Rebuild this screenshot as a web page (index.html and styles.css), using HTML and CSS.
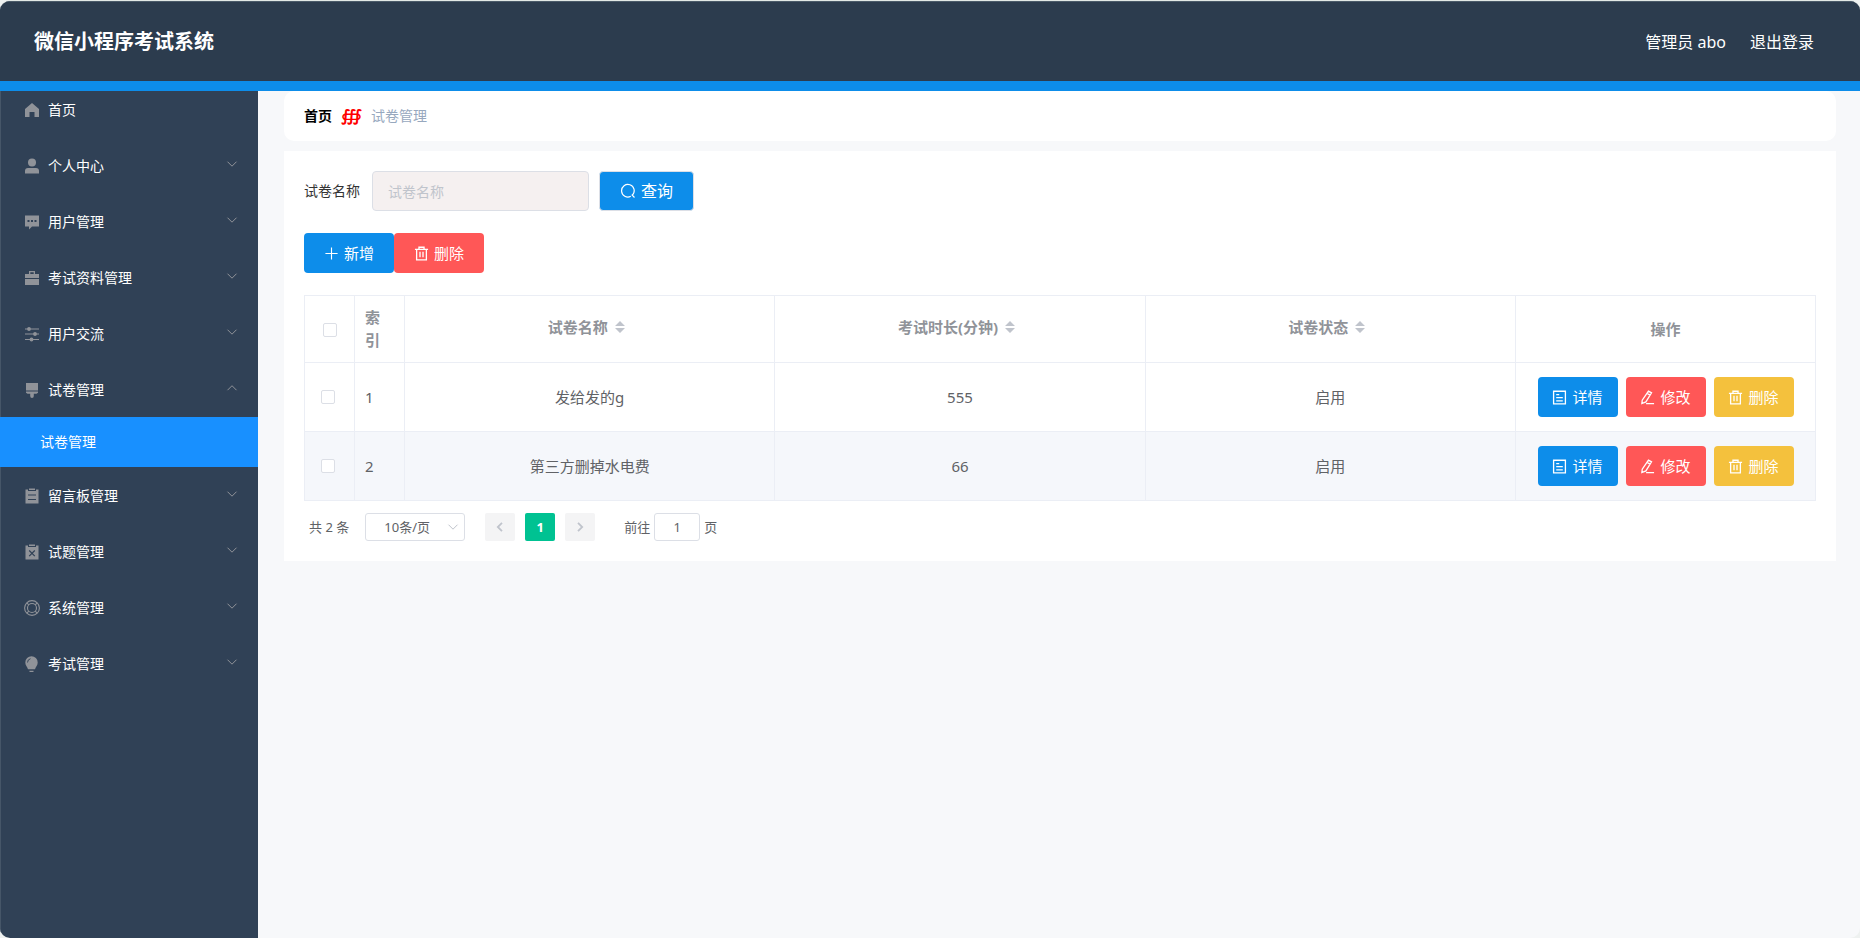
FILE: index.html
```html
<!DOCTYPE html>
<html lang="zh-CN">
<head>
<meta charset="utf-8">
<title>微信小程序考试系统</title>
<link rel="stylesheet" href="styles.css">
</head>
<body>
<svg class="sprite" aria-hidden="true">
  <symbol id="i-home" viewBox="0 0 16 16"><path fill="currentColor" d="M8 1 1 7v8h4.500v-5h5v5H15V7z"/></symbol>
  <symbol id="i-user" viewBox="0 0 16 16"><circle cx="8" cy="4.500" r="4" fill="currentColor"/><path fill="currentColor" d="M1 15.500V13q0-3 3-3h8q3 0 3 3v2.500z"/></symbol>
  <symbol id="i-chat" viewBox="0 0 16 16"><path fill="currentColor" fill-rule="evenodd" d="M1 1.500h14v11H8l-3 3v-3H1zM3.500 6v2h2V6zM7 6v2h2V6zm3.500 0v2h2V6z"/></symbol>
  <symbol id="i-case" viewBox="0 0 16 16"><path fill="currentColor" fill-rule="evenodd" d="M5 1h6v3h4v4H1V4h4zm1.300 1.300V4h3.400V2.300zM1 9h14v6H1z"/></symbol>
  <symbol id="i-sliders" viewBox="0 0 16 16"><path stroke="currentColor" stroke-width="1.200" d="M1 3h14M1 8h14M1 13.500h14"/><g fill="currentColor"><circle cx="5" cy="3" r="1.900"/><circle cx="11" cy="8" r="1.900"/><circle cx="7.500" cy="13.500" r="1.900"/></g></symbol>
  <symbol id="i-brush" viewBox="0 0 16 16"><path fill="currentColor" d="M2 1h12v7.500H2zM2 9.500h12v1.300l-1.500 1h-2.700V14q0 2-1.800 2T6.200 14v-2.200H3.500l-1.500-1z"/></symbol>
  <symbol id="i-order" viewBox="0 0 16 16"><path fill="currentColor" fill-rule="evenodd" d="M1.500 1.500H4V3h8V1.500h2.500v14h-13zM4 6.500v1h8v-1zm0 4.500v1h8v-1z"/><path fill="currentColor" d="M5 .500h6V2H5z"/></symbol>
  <symbol id="i-claim" viewBox="0 0 16 16"><path fill="currentColor" d="M1.500 1.500H4V3h8V1.500h2.500v14h-13zM5 .500h6V2H5z"/><path stroke="#304156" stroke-width="1.200" d="m5.200 6.500 5.600 5.600m0-5.600-5.600 5.600"/></symbol>
  <symbol id="i-help" viewBox="0 0 16 16"><g fill="none" stroke="currentColor" stroke-width="1.100"><circle cx="8" cy="8" r="7.400"/><circle cx="8" cy="8" r="4.500"/><path d="m2.800 2.800 2 2m6.400 6.400 2 2m0-10.400-2 2m-6.400 6.400-2 2"/></g></symbol>
  <symbol id="i-bulb" viewBox="0 0 16 16"><path fill="currentColor" d="M7.500.300a6.200 6.200 0 0 1 6.200 6.200c0 3-2 4-2.700 6.700H4C3.300 10.500 1.300 9.500 1.300 6.500A6.200 6.200 0 0 1 7.500.300zM5.500 14.800h4V16h-4z"/><path fill="none" stroke="#304156" stroke-width=".9" d="M3.500 6.500a4 4 0 0 1 3-3.800"/></symbol>
  <symbol id="i-down" viewBox="0 0 12 12"><path fill="none" stroke="currentColor" d="m1.500 3.700 4.500 4.500 4.500-4.500"/></symbol>
  <symbol id="i-up" viewBox="0 0 12 12"><path fill="none" stroke="currentColor" d="m1.500 8.200 4.500-4.500 4.500 4.500"/></symbol>
  <symbol id="i-left" viewBox="0 0 12 12"><path fill="none" stroke="currentColor" stroke-width="1.800" d="M8 1.800 3.800 6 8 10.200"/></symbol>
  <symbol id="i-right" viewBox="0 0 12 12"><path fill="none" stroke="currentColor" stroke-width="1.800" d="M4 1.800 8.200 6 4 10.200"/></symbol>
  <symbol id="i-search" viewBox="0 0 16 16"><path fill="none" stroke="currentColor" stroke-width="1.200" d="M10.800 13.300A6.300 6.300 0 1 1 12.500 12m-.8-.3 2.800 2.800"/></symbol>
  <symbol id="i-plus" viewBox="0 0 16 16"><path stroke="currentColor" stroke-width="1.200" d="M8 1.500v13M1.500 8h13"/></symbol>
  <symbol id="i-trash" viewBox="0 0 16 16"><path fill="none" stroke="currentColor" stroke-width="1.400" d="M1 3.500h14M5.300 3.500V1.300h5.400v2.200M2.800 3.500v11.200h10.400V3.500M6.400 6v6M9.600 6v6"/></symbol>
  <symbol id="i-doc" viewBox="0 0 16 16"><path fill="none" stroke="currentColor" stroke-width="1.400" d="M1.700 1.300h12.600v13.400H1.700zM4.500 5h3.200M4.500 8.200h7M4.500 11.500h7"/></symbol>
  <symbol id="i-edit" viewBox="0 0 16 16"><path fill="none" stroke="currentColor" stroke-width="1.400" d="M9 1.200 12.300 3 6.300 12.700 2 14.400l.4-3.600zM7.500 3.600l3.300 1.900M6.500 14.500H15"/></symbol>
  <symbol id="i-sort" viewBox="0 0 10 12"><path fill="currentColor" d="M0 5 5 0l5 5zM0 7l5 5 5-5z"/></symbol>
</svg>
<div class="app">
  <header class="topbar">
    <h1 class="brand">微信小程序考试系统</h1>
    <nav class="account"><span>管理员 abo</span><a href="#">退出登录</a></nav>
  </header>
  <div class="body">
    <nav class="sidebar">
      <a class="item home" href="#"><svg class="ico"><use href="#i-home"/></svg><span>首页</span></a>
      <button class="item"><svg class="ico"><use href="#i-user"/></svg><span>个人中心</span><svg class="arrow"><use href="#i-down"/></svg></button>
      <button class="item"><svg class="ico"><use href="#i-chat"/></svg><span>用户管理</span><svg class="arrow"><use href="#i-down"/></svg></button>
      <button class="item"><svg class="ico"><use href="#i-case"/></svg><span>考试资料管理</span><svg class="arrow"><use href="#i-down"/></svg></button>
      <button class="item"><svg class="ico"><use href="#i-sliders"/></svg><span>用户交流</span><svg class="arrow"><use href="#i-down"/></svg></button>
      <button class="item" aria-expanded="true"><svg class="ico"><use href="#i-brush"/></svg><span>试卷管理</span><svg class="arrow"><use href="#i-up"/></svg></button>
      <a class="subitem" href="#">试卷管理</a>
      <button class="item"><svg class="ico"><use href="#i-order"/></svg><span>留言板管理</span><svg class="arrow"><use href="#i-down"/></svg></button>
      <button class="item"><svg class="ico"><use href="#i-claim"/></svg><span>试题管理</span><svg class="arrow"><use href="#i-down"/></svg></button>
      <button class="item"><svg class="ico"><use href="#i-help"/></svg><span>系统管理</span><svg class="arrow"><use href="#i-down"/></svg></button>
      <button class="item"><svg class="ico"><use href="#i-bulb"/></svg><span>考试管理</span><svg class="arrow"><use href="#i-down"/></svg></button>
    </nav>
    <main class="main">
      <nav class="crumbs"><a href="#">首页</a><span class="sep">∰</span><span class="here">试卷管理</span></nav>
      <section class="card">
        <form class="search">
          <label for="paper">试卷名称</label>
          <input id="paper" class="field" type="text" placeholder="试卷名称">
          <button class="btn query" type="button"><svg class="ico"><use href="#i-search"/></svg>查询</button>
        </form>
        <div class="actions">
          <button class="btn blue"><svg class="ico"><use href="#i-plus"/></svg>新增</button>
          <button class="btn red"><svg class="ico"><use href="#i-trash"/></svg>删除</button>
        </div>
        <table class="grid">
          <colgroup><col class="c-narrow"><col class="c-narrow"><col><col><col><col class="c-ops"></colgroup>
          <thead>
            <tr>
              <th class="pick"><input type="checkbox" aria-label="全选"></th>
              <th class="idx">索引</th>
              <th><span class="sortable">试卷名称<svg class="sort"><use href="#i-sort"/></svg></span></th>
              <th><span class="sortable">考试时长(分钟)<svg class="sort"><use href="#i-sort"/></svg></span></th>
              <th><span class="sortable">试卷状态<svg class="sort"><use href="#i-sort"/></svg></span></th>
              <th>操作</th>
            </tr>
          </thead>
          <tbody>
            <tr>
              <td class="pick"><input type="checkbox" aria-label="选择第1行"></td>
              <td class="idx">1</td><td>发给发的g</td><td>555</td><td>启用</td>
              <td><div class="ops">
                <button class="btn blue"><svg class="ico"><use href="#i-doc"/></svg>详情</button>
                <button class="btn red"><svg class="ico"><use href="#i-edit"/></svg>修改</button>
                <button class="btn yellow"><svg class="ico"><use href="#i-trash"/></svg>删除</button>
              </div></td>
            </tr>
            <tr>
              <td class="pick"><input type="checkbox" aria-label="选择第2行"></td>
              <td class="idx">2</td><td>第三方删掉水电费</td><td>66</td><td>启用</td>
              <td><div class="ops">
                <button class="btn blue"><svg class="ico"><use href="#i-doc"/></svg>详情</button>
                <button class="btn red"><svg class="ico"><use href="#i-edit"/></svg>修改</button>
                <button class="btn yellow"><svg class="ico"><use href="#i-trash"/></svg>删除</button>
              </div></td>
            </tr>
          </tbody>
        </table>
        <div class="pager">
          <span>共 2 条</span>
          <span class="size"><select aria-label="每页条数"><option>10条/页</option></select><svg class="arrow"><use href="#i-down"/></svg></span>
          <div class="pages">
            <button aria-label="上一页" disabled><svg class="arrow"><use href="#i-left"/></svg></button>
            <button class="current">1</button>
            <button aria-label="下一页" disabled><svg class="arrow"><use href="#i-right"/></svg></button>
          </div>
          <label class="jump">前往<input type="text" value="1">页</label>
        </div>
      </section>
    </main>
  </div>
</div>
</body>
</html>
```
FILE: styles.css
```css
* { box-sizing: border-box; }
body {
  margin: 0;
  background: #eef1f0;
  color: #606266;
  font: 14px/20px "Noto Sans", "Noto Sans CJK SC", sans-serif;
}
a { color: inherit; text-decoration: none; }
button, input, select { margin: 0; font: inherit; color: inherit; }
button { border: 0; padding: 0; background: none; cursor: pointer; }
svg { display: block; flex: none; }
.sprite { position: absolute; width: 0; height: 0; }

.app {
  display: flex;
  flex-direction: column;
  min-height: 100vh;
  border-top: 1px solid #e3e9e6;
  border-radius: 10px;
  overflow: hidden;
}
.topbar {
  display: flex;
  align-items: center;
  justify-content: space-between;
  height: 90px;
  padding: 0 46px 0 34px;
  border-top: 1px solid #4b5b69;
  border-bottom: 10px solid #0d8dea;
  background: #2c3c4e;
  color: #fff;
}
.brand { margin: 0; font-size: 20px; line-height: 28px; }
.account { display: flex; gap: 24px; font-size: 16px; line-height: 24px; }

.body { display: flex; flex: 1; }
.sidebar {
  display: flex;
  flex-direction: column;
  width: 258px;
  background: #304156;
  border-left: 1px solid #465668;
  color: #fff;
}
.item {
  display: flex;
  align-items: center;
  gap: 8px;
  height: 56px;
  padding: 2px 20px 0 23px;
  text-align: left;
}
.home { height: 36px; margin-bottom: 10px; }
.item .ico { width: 16px; height: 16px; color: #909399; }
.item .arrow { width: 12px; height: 12px; margin: 0 0 4px auto; color: #909399; }
.subitem { height: 50px; margin-left: -1px; padding-left: 40px; background: #1890ff; line-height: 50px; }

.main { flex: 1; min-width: 0; padding: 0 24px 24px 26px; background: #f7f8fa; }
.crumbs {
  display: flex;
  align-items: center;
  gap: 9px;
  height: 50px;
  margin-bottom: 10px;
  padding: 0 20px;
  border-radius: 10px;
  background: #fff;
}
.crumbs a { color: #000; font-weight: 700; }
.sep { color: #f00; font: italic 700 16px/20px "DejaVu Sans", sans-serif; }
.here { color: #97a8be; }

.card { padding: 20px; background: #fff; }
.search { display: flex; align-items: center; color: #333; }
.field {
  width: 217px;
  height: 40px;
  margin: 0 10px 0 12px;
  padding: 0 15px;
  border: 1px solid #dcdfe6;
  border-radius: 4px;
  background: #f5f0f0;
}
.field::placeholder { color: #c0c4cc; }

.btn {
  display: flex;
  align-items: center;
  justify-content: center;
  gap: 5px;
  height: 40px;
  border-radius: 4px;
  color: #fff;
  font-size: 15px;
}
.btn .ico { width: 15px; height: 15px; }
.query { width: 95px; border: 1px solid #dcdfe6; background: #0d8dea; font-size: 16px; }
.query .ico { width: 16px; height: 16px; }
.blue { background: #0d8dea; }
.red { background: #ff5757; }
.yellow { background: #f4c13d; }
.actions { display: flex; margin: 22px 0; }
.actions .btn { width: 90px; }
.ops { display: flex; justify-content: center; gap: 8px; }
.ops .btn { width: 80px; }

.grid {
  width: 100%;
  table-layout: fixed;
  border-collapse: collapse;
  font-size: 15px;
  line-height: 23px;
  text-align: center;
}
.c-narrow { width: 50px; }
.c-ops { width: 300px; }
.grid th, .grid td { padding: 10px; border: 1px solid #ebeef5; }
.grid th { color: #909399; }
.grid td { height: 69px; }
.grid tbody tr:nth-child(even) { background: #f5f7fb; }
.grid .idx { text-align: left; }
.grid .pick { padding: 0 4px 0 0; }
.grid th.pick { padding: 2px 0 0; }
.pick input {
  display: block;
  width: 14px;
  height: 14px;
  margin: 0 auto;
  appearance: none;
  border: 1px solid #dcdfe6;
  border-radius: 2px;
  background: #fff;
}
.sortable { display: inline-flex; align-items: center; gap: 7px; margin: 0 7px 4px 0; }
.sort { width: 10px; height: 12px; color: #c0c4cc; }

.pager { display: flex; align-items: center; margin-top: 12px; padding-left: 5px; font-size: 13px; }
.size { display: grid; align-items: center; margin: 0 20px 0 16px; }
.size > * { grid-area: 1 / 1; }
.size select {
  width: 100px;
  height: 28px;
  padding: 0 16px 0 0;
  appearance: none;
  border: 1px solid #dcdfe6;
  border-radius: 3px;
  background: #fff;
  text-align: center;
  text-align-last: center;
}
.pager .arrow { width: 12px; height: 12px; color: #c0c4cc; }
.size .arrow { justify-self: end; margin-right: 6px; pointer-events: none; }
.pages { display: flex; gap: 10px; }
.pages button {
  display: grid;
  place-items: center;
  width: 30px;
  height: 28px;
  border-radius: 2px;
  background: #f4f4f5;
  font-weight: 700;
}
.pages .current { background: #00c292; color: #fff; }
.jump { display: flex; align-items: center; gap: 4px; margin-left: 29px; }
.jump input {
  width: 46px;
  height: 28px;
  padding: 0;
  border: 1px solid #dcdfe6;
  border-radius: 3px;
  text-align: center;
}
```
